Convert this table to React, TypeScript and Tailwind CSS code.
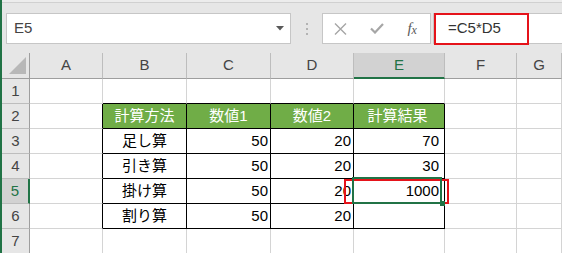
import React from "react";

const cols = ["A", "B", "C", "D", "E", "F", "G"];

type Cell = { text?: string; align?: "left" | "center" | "right" };

// rows 1..7, columns A..G
const sheet: Record<number, Record<string, Cell>> = {
  2: {
    B: { text: "計算方法", align: "center" },
    C: { text: "数値1", align: "center" },
    D: { text: "数値2", align: "center" },
    E: { text: "計算結果", align: "center" },
  },
  3: {
    B: { text: "足し算", align: "center" },
    C: { text: "50", align: "right" },
    D: { text: "20", align: "right" },
    E: { text: "70", align: "right" },
  },
  4: {
    B: { text: "引き算", align: "center" },
    C: { text: "50", align: "right" },
    D: { text: "20", align: "right" },
    E: { text: "30", align: "right" },
  },
  5: {
    B: { text: "掛け算", align: "center" },
    C: { text: "50", align: "right" },
    D: { text: "20", align: "right" },
    E: { text: "1000", align: "right" },
  },
  6: {
    B: { text: "割り算", align: "center" },
    C: { text: "50", align: "right" },
    D: { text: "20", align: "right" },
  },
};

const tableCols = ["B", "C", "D", "E"];
const inTable = (r: number, c: string) => r >= 2 && r <= 6 && tableCols.includes(c);

const cellClass = (r: number, c: string) => {
  const table = inTable(r, c);
  const rightBlack = table || (c === "A" && r >= 2 && r <= 6);
  const bottomBlack = table || (r === 1 && tableCols.includes(c));
  return [
    "flex items-center border-r border-b text-[15px] text-black",
    c === "E" ? "pl-[2px] pr-[5px]" : "px-[2px]",
    rightBlack ? "border-r-black" : "border-r-[#d4d4d4]",
    bottomBlack ? "border-b-black" : "border-b-[#d4d4d4]",
    r === 2 && table ? "bg-[#70ad47] text-white" : "bg-white",
  ].join(" ");
};

const alignClass = (a?: string) =>
  a === "right" ? "justify-end" : a === "center" ? "justify-center" : "justify-start";

const FormulaBar = () => (
  <div className="flex h-[53px] flex-col">
    <div className="h-[3px] border-b border-[#d0d0d0] bg-[#ececec]" />
    <div className="mt-[10px] flex pl-[4px]">
      <div className="flex h-[31px] w-[285px] items-center justify-between border border-[#c6c6c6] bg-white pl-[7px] pr-[6px] text-[15px] text-[#444]">
        <span>E5</span>
        <svg width="8" height="5" viewBox="0 0 8 5">
          <polygon points="0,0 8,0 4,4.5" fill="#595959" />
        </svg>
      </div>
      <div className="flex w-[31px] flex-col items-center justify-center gap-[3px]">
        <span className="h-[2px] w-[2px] bg-[#b3b3b3]" />
        <span className="h-[2px] w-[2px] bg-[#b3b3b3]" />
        <span className="h-[2px] w-[2px] bg-[#b3b3b3]" />
      </div>
      <div className="flex h-[31px] w-[109px] border border-[#c6c6c6] bg-white">
        <div className="flex w-[36px] items-center justify-center">
          <svg width="13" height="12" viewBox="0 0 13 12">
            <path d="M1 0.5 L12 11.5 M12 0.5 L1 11.5" stroke="#a6a6a6" strokeWidth="1.4" fill="none" />
          </svg>
        </div>
        <div className="flex w-[36px] items-center justify-center">
          <svg width="14" height="11" viewBox="0 0 14 11">
            <path d="M1 5.5 L5 9.5 L13 1" stroke="#a6a6a6" strokeWidth="2.2" fill="none" />
          </svg>
        </div>
        <div className="flex w-[36px] items-center justify-center font-['Liberation_Serif'] text-[15px] italic text-[#595959]">
          <span>f</span>
          <span className="mt-[3px] text-[12px]">x</span>
        </div>
      </div>
      <div className="relative ml-[2px] flex h-[31px] flex-1 items-center border-y border-l border-[#c6c6c6] bg-white pl-[14px] text-[15px] text-[#333]">
        =C5*D5
        <span className="absolute left-0 top-[-1px] h-[32px] w-[95px] border-2 border-[#e5131a]" />
      </div>
    </div>
  </div>
);

const Grid = () => (
  <div className="relative grid grid-cols-[28px_73px_84px_84px_83px_91px_72px_1fr] grid-rows-[26px_repeat(7,25px)]">
    {/* corner */}
    <div className="border-r border-b border-r-[#9e9e9e] border-b-[#9e9e9e] bg-[#e6e6e6]">
      <svg width="27" height="25" viewBox="0 0 27 25">
        <polygon points="24,4 24,21 7,21" fill="#b8b8b8" />
      </svg>
    </div>
    {cols.map((c) => (
      <div
        key={c}
        className={`flex items-center justify-center border-b border-r text-[15px] ${
          c === "E"
            ? "border-b-2 border-b-[#217346] border-r-[#bdbdbd] bg-[#d2d2d2] text-[#217346]"
            : "border-b-[#9e9e9e] border-r-[#bdbdbd] bg-[#e6e6e6] text-[#444]"
        }`}
      >
        {c}
      </div>
    ))}
    {[1, 2, 3, 4, 5, 6, 7].map((r) => (
      <React.Fragment key={r}>
        <div
          className={`flex items-center justify-center border-b border-r text-[15px] ${
            r === 5
              ? "border-r-2 border-r-[#217346] border-b-[#bdbdbd] bg-[#d2d2d2] text-[#217346]"
              : "border-r-[#9e9e9e] border-b-[#bdbdbd] bg-[#e6e6e6] text-[#444]"
          }`}
        >
          {r}
        </div>
        {cols.map((c) => {
          const cell = sheet[r]?.[c];
          return (
            <div key={c} className={`${cellClass(r, c)} ${alignClass(cell?.align)}`}>
              {cell?.text}
            </div>
          );
        })}
      </React.Fragment>
    ))}

    {/* red marker around D5:E5 */}
    <div className="absolute left-[342px] top-[126px] h-[25px] w-[105px] border-2 border-[#e5131a]" />
    {/* active cell E5 with fill handle */}
    <div className="absolute left-[350px] top-[124px] h-[27px] w-[90px] border-2 border-[#217346]" />
    <div className="absolute left-[438px] top-[148px] h-[5px] w-[5px] bg-[#217346]" />
  </div>
);

export default function App() {
  return (
    <div className="relative h-[253px] w-[562px] overflow-hidden border-l-2 border-[#217346] bg-[#e6e6e6] font-['Liberation_Sans','Noto_Sans_CJK_JP',sans-serif]">
      <FormulaBar />
      <Grid />
    </div>
  );
}
